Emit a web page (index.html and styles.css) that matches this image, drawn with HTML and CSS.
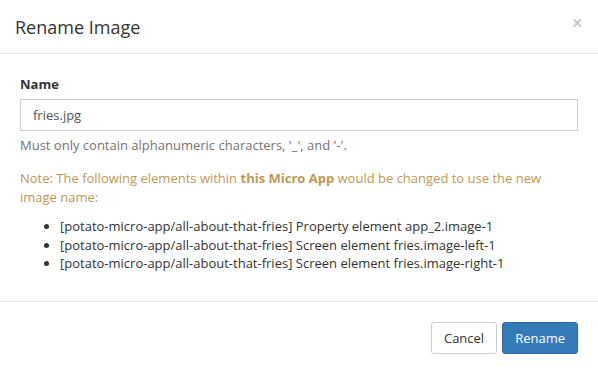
FILE: index.html
```html
<!DOCTYPE html>
<html lang="en">
  <head>
    <meta charset="UTF-8" />
    <title>Rename Image</title>
    <link rel="stylesheet" href="styles.css">
  </head>
  <body>
    <div class="modal">
      <div class="modal-header">
        <button type="button" class="close">&times;</button>
        <h4 class="modal-title">Rename Image</h4>
      </div>

      <div class="modal-body">
        <div class="form-group">
          <label for="imageName">Name</label>
          <input type="text" id="imageName" value="fries.jpg" />
          <div class="help-block">
            Must only contain alphanumeric characters, '_', and '-'.
          </div>
        </div>

        <p class="note">
          Note: The following elements within <strong>this Micro App</strong>
          would be changed to use the new image name:
        </p>
        <ul class="usages">
          <li>[potato-micro-app/all-about-that-fries] Property element app_2.image-1</li>
          <li>[potato-micro-app/all-about-that-fries] Screen element fries.image-left-1</li>
          <li>[potato-micro-app/all-about-that-fries] Screen element fries.image-right-1</li>
        </ul>
      </div>

      <div class="modal-footer">
        <button type="button" class="btn btn-default">Cancel</button>
        <button type="button" class="btn btn-primary">Rename</button>
      </div>
    </div>
  </body>
</html>
```

FILE: styles.css
```css
* {
  margin: 0;
  padding: 0;
  box-sizing: border-box;
}

body {
  font-family: "Open Sans", "Liberation Sans", sans-serif;
  font-size: 13px;
  line-height: 1.42857;
  color: #333333;
  background: #ffffff;
}

.modal {
  width: 598px;
  background: #ffffff;
}

.modal-header {
  padding: 14px 15px 13px 15px;
  border-bottom: 1px solid #e5e5e5;
}

.modal-title {
  font-size: 18px;
  font-weight: 400;
  line-height: 26px;
  color: #333333;
}

.close {
  float: right;
  margin-top: -1px;
  margin-right: 0;
  background: none;
  border: none;
  font-family: "Open Sans", "Liberation Sans", sans-serif;
  font-size: 20px;
  font-weight: 700;
  line-height: 1;
  color: #000000;
  opacity: 0.2;
  cursor: pointer;
}

.modal-body {
  padding: 21px 20px 20px 20px;
}

.form-group label {
  display: block;
  margin-bottom: 5px;
  font-weight: 700;
}

.form-group input {
  display: block;
  width: 100%;
  height: 32px;
  padding: 6px 12px;
  border: 1px solid #cccccc;
  font-family: inherit;
  font-size: 13px;
  color: #555555;
}

.help-block {
  margin-top: 5px;
  color: #737373;
}

.note {
  margin-top: 15px;
  color: #c09853;
}

.usages {
  margin-top: 11px;
  margin-bottom: 8px;
  padding-left: 40px;
}

.modal-footer {
  display: flex;
  justify-content: flex-end;
  gap: 5px;
  padding: 20px;
  border-top: 1px solid #e5e5e5;
}

.btn {
  height: 32px;
  padding: 5px 12px;
  border: 1px solid transparent;
  border-radius: 3px;
  font-family: inherit;
  font-size: 13px;
  line-height: 20px;
  cursor: pointer;
}

.btn-default {
  background: #ffffff;
  border-color: #cccccc;
  color: #333333;
}

.btn-primary {
  background: #337ab7;
  border-color: #2e6da4;
  color: #ffffff;
}
```
